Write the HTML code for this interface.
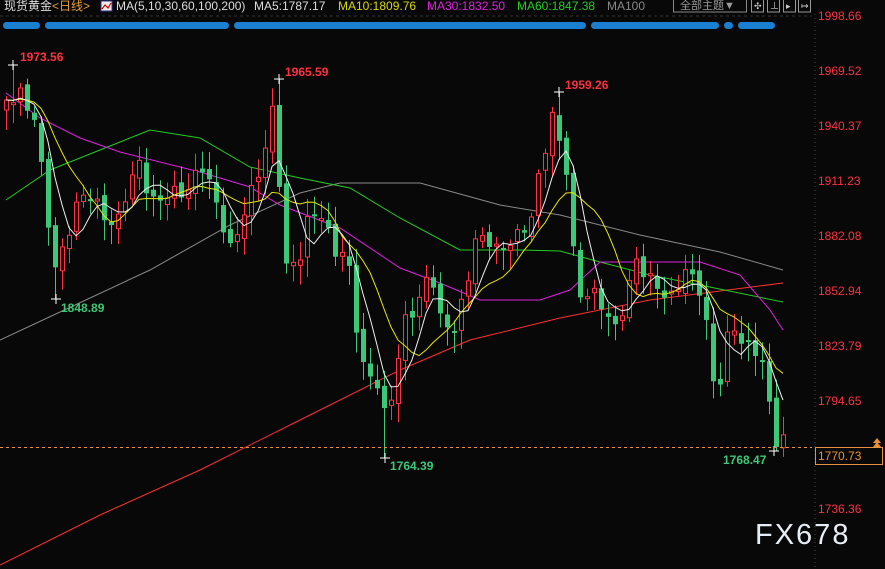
<!DOCTYPE html>
<html><head><meta charset="utf-8"><style>
html,body{margin:0;padding:0;background:#080808;width:885px;height:569px;overflow:hidden}
svg{display:block}
text{font-family:"Liberation Sans","Noto Sans CJK SC",sans-serif}
</style></head><body>
<svg id="s" width="885" height="569" xmlns="http://www.w3.org/2000/svg">
<rect width="885" height="569" fill="#080808"/>
<line x1="815" y1="14" x2="815" y2="569" stroke="#444" stroke-dasharray="1,3"/>
<line x1="0" y1="16" x2="812" y2="16" stroke="#333" stroke-dasharray="3,3"/>
<g id="ma"></g>
<g id="c"></g>
<g id="cr"></g>
<line x1="0" y1="447.5" x2="812" y2="447.5" stroke="#e8903a" stroke-dasharray="3,3"/>
<text x="4" y="10" font-size="12" fill="#ddd">现货黄金<tspan fill="#e8a030">&lt;日线&gt;</tspan></text>
<rect x="101" y="1" width="11" height="10" fill="#eee" stroke="#338" stroke-width="1"/>
<polyline points="102,9 105,5 108,8 111,3" fill="none" stroke="#c00" stroke-width="1.2"/>
<text x="116" y="10" font-size="12" fill="#ddd">MA(5,10,30,60,100,200)</text>
<text x="254" y="10" font-size="12" fill="#ddd">MA5:1787.17</text>
<text x="338" y="10" font-size="12" fill="#d8d800">MA10:1809.76</text>
<text x="427" y="10" font-size="12" fill="#e020e0">MA30:1832.50</text>
<text x="517" y="10" font-size="12" fill="#22cc22">MA60:1847.38</text>
<text x="607" y="10" font-size="12" fill="#888">MA100</text>
<rect x="673.5" y="-1" width="73" height="13" fill="none" stroke="#888"/>
<text x="680" y="9" font-size="11" fill="#999">全部主题▼</text>
<rect x="751.5" y="-1" width="12" height="13" fill="none" stroke="#999"/>
<rect x="767.5" y="-1" width="12" height="13" fill="none" stroke="#999"/>
<rect x="783.5" y="-1" width="12" height="13" fill="none" stroke="#999"/>
<rect x="798.5" y="-1" width="12" height="13" fill="none" stroke="#999"/>
<text x="754" y="9" font-size="9" fill="#ccc">✣</text>
<text x="770" y="9" font-size="9" fill="#ccc">⊥</text>
<text x="786" y="9" font-size="9" fill="#ccc">▸</text>
<text x="801" y="9" font-size="9" fill="#ccc">↦</text>
<g fill="#1a7fd0">
<rect x="3" y="22" width="37" height="7" rx="3.5"/>
<rect x="45" y="22" width="184" height="7" rx="3.5"/>
<rect x="234" y="22" width="352" height="7" rx="3.5"/>
<rect x="591" y="22" width="128" height="7" rx="3.5"/>
<rect x="724" y="22" width="9" height="7" rx="3.5"/>
<rect x="738" y="22" width="37" height="7" rx="3.5"/>
</g>
<g font-size="12" fill="#ff3040">
<text x="818" y="20">1998.66</text>
<text x="818" y="75">1969.52</text>
<text x="818" y="130">1940.37</text>
<text x="818" y="185">1911.23</text>
<text x="818" y="240">1882.08</text>
<text x="818" y="295">1852.94</text>
<text x="818" y="350">1823.79</text>
<text x="818" y="405">1794.65</text>
<text x="818" y="513">1736.36</text>
</g>
<rect x="815.5" y="447.5" width="67" height="17" fill="#080808" stroke="#e8903a"/>
<text x="818" y="460" font-size="12" fill="#e8903a">1770.73</text>
<polygon points="873,443 877,438 881,443" fill="#e8903a"/><polygon points="873,447 877,442 881,447" fill="#e8903a"/>
<g font-size="12" font-weight="bold">
<text x="20" y="61" fill="#ff3040">1973.56</text>
<text x="285" y="76" fill="#ff3040">1965.59</text>
<text x="565" y="89" fill="#ff3040">1959.26</text>
<text x="61" y="312" fill="#3cc878">1848.89</text>
<text x="390" y="470" fill="#3cc878">1764.39</text>
<text x="723" y="464" fill="#3cc878">1768.47</text>
</g>
<text x="755" y="544" font-size="29" fill="#e8eef5" letter-spacing="2">FX678</text>
</svg>
<script>
(function(){
var NS="http://www.w3.org/2000/svg";
function pl(pts,col,g){var p=document.createElementNS(NS,"polyline");p.setAttribute("points",pts.map(function(a){return a[0]+","+a[1]}).join(" "));p.setAttribute("fill","none");p.setAttribute("stroke",col);p.setAttribute("stroke-width","1");g.appendChild(p);}
function interp(k,x){for(var i=0;i<k.length-1;i++){if(x<=k[i+1][0]){var t=(x-k[i][0])/(k[i+1][0]-k[i][0]);return k[i][1]+t*(k[i+1][1]-k[i][1]);}}return k[k.length-1][1];}
var K=[[6,100],[20,95],[35,120],[45,200],[55,270],[62,250],[75,210],[85,190],[100,210],[115,230],[125,195],[140,160],[150,205],[165,195],[190,190],[200,160],[215,200],[230,250],[245,210],[265,150],[272,110],[278,165],[285,270],[300,255],[310,210],[320,215],[335,250],[348,260],[355,320],[365,380],[375,370],[382,420],[390,400],[395,375],[405,320],[420,300],[430,265],[440,320],[455,330],[465,290],[475,240],[490,240],[500,255],[510,240],[520,235],[530,220],[540,170],[553,110],[560,150],[570,180],[575,300],[590,290],[605,310],[615,330],[625,300],[635,260],[650,280],[660,290],[670,300],[685,270],[700,290],[707,330],[715,400],[722,370],[730,320],[740,340],[750,350],[760,350],[768,400],[775,440],[783,440]];
var HI={1:65,39:79,79:92},LO={7:299,54:458,110:451};
var g=document.getElementById("c"),m=document.getElementById("ma"),cr=document.getElementById("cr");
var xs=[],cl=[],op=[];
for(var i=0;i<112;i++){var x=6+i*7;xs.push(x);var c=interp(K,x)+Math.sin(i*2.3)*7;cl.push(c);op.push(i==0?c+10:cl[i-1]+Math.sin(i*1.7)*4);}
for(var i=0;i<112;i++){var o=op[i],c=cl[i],tp=Math.min(o,c),bt=Math.max(o,c);if(bt-tp<2)bt=tp+2;
var hi=tp-4-Math.abs(Math.sin(i*3.1))*14,lo=bt+4+Math.abs(Math.cos(i*2.7))*16;
if(HI[i]!==undefined)hi=HI[i];if(LO[i]!==undefined)lo=LO[i];
var up=c<o;var col=up?"#ff3344":"#3cc878";
var l=document.createElementNS(NS,"line");l.setAttribute("x1",xs[i]+0.5);l.setAttribute("x2",xs[i]+0.5);l.setAttribute("y1",hi);l.setAttribute("y2",lo);l.setAttribute("stroke",col);g.appendChild(l);
var r=document.createElementNS(NS,"rect");r.setAttribute("y",tp);r.setAttribute("height",bt-tp);
if(up){r.setAttribute("x",xs[i]-1.5);r.setAttribute("width",4);r.setAttribute("fill","#080808");r.setAttribute("stroke",col);}
else{r.setAttribute("x",xs[i]-2);r.setAttribute("width",5);r.setAttribute("fill",col);}
g.appendChild(r);}
function ma(n){var a=[];for(var i=0;i<112;i++){var s=0;for(var j=0;j<n;j++){s+=cl[Math.max(0,i-j)];}a.push([xs[i],s/n]);}return a;}
pl([[0,565],[100,515],[200,470],[300,420],[400,370],[470,340],[560,318],[650,300],[783,283]],"#ff3030",m);
pl([[0,340],[60,312],[150,270],[230,225],[300,193],[340,183],[420,183],[500,205],[560,215],[640,235],[720,252],[783,270]],"#8a8a8a",m);
pl([[6,200],[50,170],[100,150],[150,130],[200,138],[250,167],[300,178],[350,188],[400,218],[460,250],[520,250],[560,251],[600,262],[650,275],[700,285],[783,302]],"#22cc22",m);
pl([[6,93],[40,118],[80,138],[120,152],[200,172],[250,187],[280,205],[340,228],[400,268],[440,283],[480,300],[540,300],[570,290],[600,262],[640,262],[700,262],[740,275],[770,310],[783,330]],"#e020e0",m);
var m10=ma(10),m5=ma(5);
var g2=document.createElementNS(NS,"g");document.getElementById("s").insertBefore(g2,cr);
pl(m10,"#e8e800",g2);
pl(m5,"#f0f0f0",g2);
function cross(x,y){pl([[x-5,y],[x+5,y]],"#fff",cr);pl([[x,y-5],[x,y+5]],"#fff",cr);}
cross(13,65);cross(279,79);cross(559,92);cross(56,299);cross(385,458);cross(774,451);
})();
</script>
</body></html>
